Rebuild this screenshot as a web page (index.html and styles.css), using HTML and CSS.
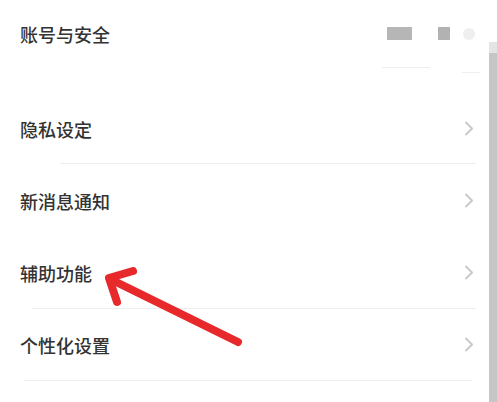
FILE: index.html
```html
<!DOCTYPE html>
<html lang="zh-CN">
<head>
<meta charset="utf-8">
<title>设置</title>
<link rel="stylesheet" href="styles.css">
</head>
<body>
<div class="page">
  <div class="list">
    <div class="row row-top">
      <span class="label">账号与安全</span>
      <div class="blurred">
        <span class="blur-rect"></span>
        <span class="blur-square"></span>
        <span class="blur-dot"></span>
      </div>
    </div>
    <div class="top-lines">
      <span class="seg seg-a"></span>
      <span class="seg seg-b"></span>
    </div>
    <div class="section-gap"></div>

    <div class="row row-2">
      <span class="label">隐私设定</span>
      <span class="chev"><svg width="10" height="15" viewBox="0 0 10 15"><path d="M2 1.5 L8 7.5 L2 13.5" fill="none" stroke="#c9c9c9" stroke-width="2" stroke-linecap="round" stroke-linejoin="round"/></svg></span>
    </div>
    <div class="divider div-a"></div>

    <div class="row row-3">
      <span class="label">新消息通知</span>
      <span class="chev"><svg width="10" height="15" viewBox="0 0 10 15"><path d="M2 1.5 L8 7.5 L2 13.5" fill="none" stroke="#c9c9c9" stroke-width="2" stroke-linecap="round" stroke-linejoin="round"/></svg></span>
    </div>

    <div class="row row-4">
      <span class="label">辅助功能</span>
      <span class="chev"><svg width="10" height="15" viewBox="0 0 10 15"><path d="M2 1.5 L8 7.5 L2 13.5" fill="none" stroke="#c9c9c9" stroke-width="2" stroke-linecap="round" stroke-linejoin="round"/></svg></span>
    </div>
    <div class="divider div-b"></div>

    <div class="row row-5">
      <span class="label">个性化设置</span>
      <span class="chev"><svg width="10" height="15" viewBox="0 0 10 15"><path d="M2 1.5 L8 7.5 L2 13.5" fill="none" stroke="#c9c9c9" stroke-width="2" stroke-linecap="round" stroke-linejoin="round"/></svg></span>
    </div>
    <div class="divider div-c"></div>
  </div>

  <div class="scrollbar"><div class="scroll-cap"></div></div>

  <svg class="arrow" width="497" height="402" viewBox="0 0 497 402">
    <path d="M238 342 L110 279" fill="none" stroke="#e8292b" stroke-width="8" stroke-linecap="round"/>
    <path d="M133 271 L109 278 L117 302" fill="none" stroke="#e8292b" stroke-width="8" stroke-linecap="round" stroke-linejoin="round"/>
  </svg>
</div>
</body>
</html>
```

FILE: styles.css
```css
html, body {
  margin: 0;
  padding: 0;
  background: #ffffff;
}

.page {
  position: relative;
  width: 497px;
  height: 402px;
  overflow: hidden;
  background: #ffffff;
  font-family: "Noto Sans CJK SC", "Noto Sans", sans-serif;
}

.list {
  display: flex;
  flex-direction: column;
}

.row {
  display: flex;
  align-items: center;
  justify-content: space-between;
  padding: 0 23px 0 20px;
  box-sizing: border-box;
}

.label {
  font-size: 18px;
  line-height: 20px;
  font-weight: 500;
  color: #333333;
}

.row-top { height: 67px; padding-right: 22px; }
.row-2 { height: 69px; }
.row-3 { height: 73px; }
.row-4 { height: 71px; }
.row-5 { height: 71px; }

.blurred {
  display: flex;
  align-items: center;
  filter: blur(0.6px);
}

.blur-rect {
  width: 25px;
  height: 13px;
  background: #b6b6b6;
}

.blur-square {
  width: 12px;
  height: 13px;
  margin-left: 26px;
  background: #b2b2b2;
}

.blur-dot {
  width: 12px;
  height: 12px;
  margin-left: 13px;
  border-radius: 50%;
  background: #efefef;
}

.top-lines {
  display: flex;
  height: 6px;
  padding-left: 382px;
}

.seg {
  display: block;
  height: 1px;
  background: #efefef;
}

.seg-a { width: 48px; }
.seg-b { width: 18px; margin-left: 32px; margin-top: 5px; }

.section-gap { height: 21px; }

.chev {
  display: flex;
  width: 10px;
  height: 15px;
}

.divider {
  height: 1px;
  background: #eeeeee;
}

.div-a { margin: 0 21px 0 60px; }
.div-b { margin: 0 21px 0 32px; }
.div-c { margin: 0 25px 0 24px; }

.scrollbar {
  position: absolute;
  right: 0;
  top: 42px;
  bottom: 0;
  width: 8px;
  background: #c6c6c6;
}

.scroll-cap {
  height: 11px;
  background: #e4e4e4;
}

.arrow {
  position: absolute;
  left: 0;
  top: 0;
  pointer-events: none;
}
```
